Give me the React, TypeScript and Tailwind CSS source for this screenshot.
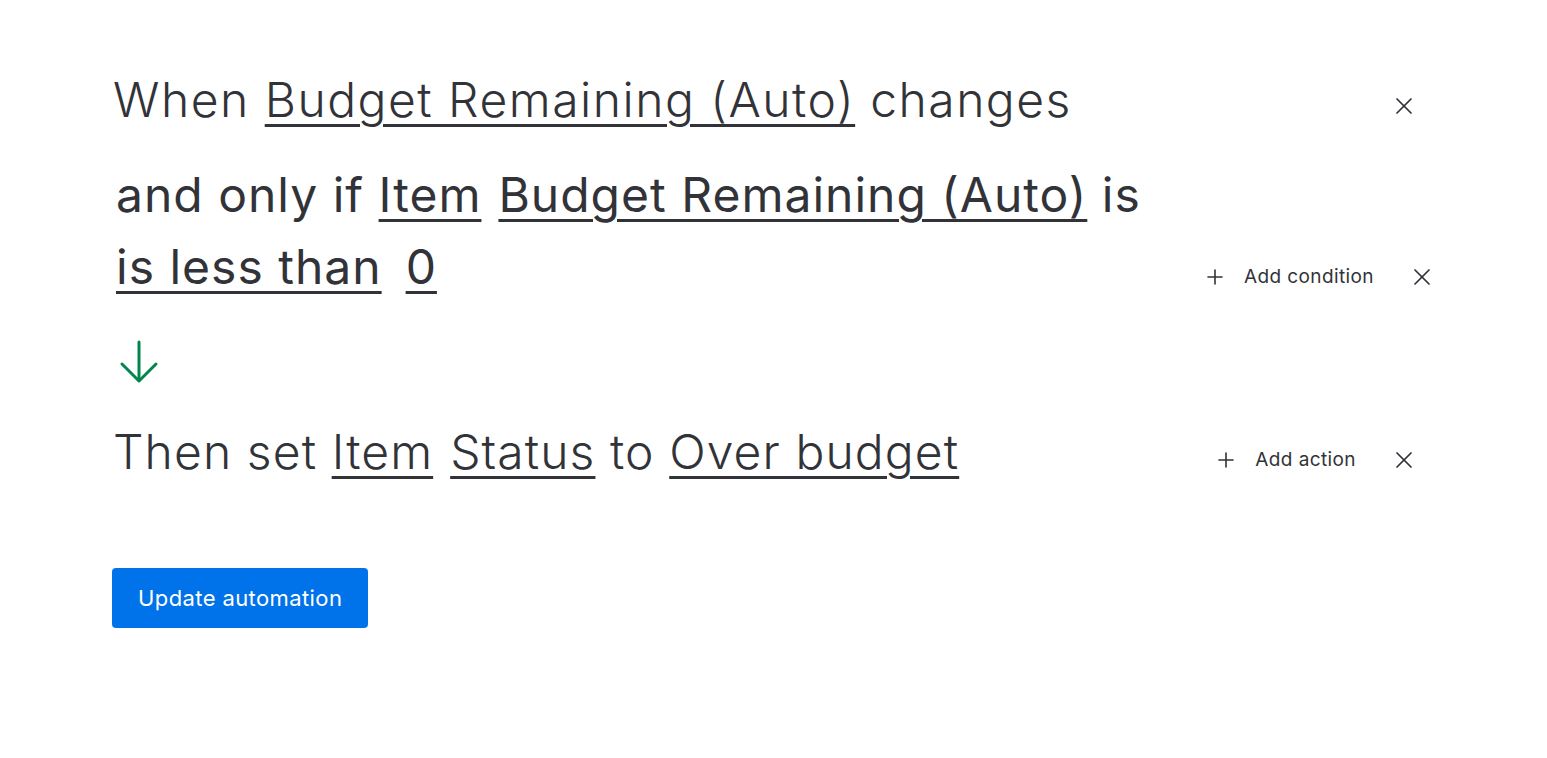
import { Plus, X } from "lucide-react";

const main = "font-['Inter','Noto_Sans',sans-serif] text-[48px] text-[#323338]";
const link = "underline decoration-[3px] underline-offset-[7px] decoration-[#323338] cursor-pointer";

function Pick({ children }: { children: React.ReactNode }) {
  return <span className={link}>{children}</span>;
}

function SideAction({ label, extra }: { label?: string; extra?: string }) {
  return (
    <div className={`flex items-center text-[#323338] font-['Inter',sans-serif] text-[19px] tracking-[0.4px] ${extra || ""}`}>
      {label && (
        <button className="flex items-center gap-[17px] mr-[34px]">
          <Plus className="w-[24px] h-[24px]" strokeWidth={1.6} />
          <span>{label}</span>
        </button>
      )}
      <button>
        <X className="w-[28px] h-[28px]" strokeWidth={1.5} />
      </button>
    </div>
  );
}

export default function App() {
  return (
    <div className="min-h-screen bg-white pl-[113px] pt-[70px]">
      <div className="w-[1305px]">
        {/* Trigger */}
        <div className="flex items-center justify-between">
          <div className={`${main} font-light leading-[60px] tracking-[1.5px]`}>
            When <Pick>Budget Remaining (Auto)</Pick> changes
          </div>
          <SideAction extra="mt-[12px]" />
        </div>

        {/* Condition */}
        <div className="flex items-end justify-between mt-[29px] pl-[3px] w-[1323px]">
          <div className={`${main} font-normal leading-[72px] tracking-[1px] w-[1060px]`}>
            and only if <span className="mr-[17px]"><Pick>Item</Pick></span>
            <Pick>Budget Remaining (Auto)</Pick> is{" "}
            <span className="mr-[24px] whitespace-nowrap"><Pick>is less than</Pick></span>
            <Pick>0</Pick>
          </div>
          <SideAction label="Add condition" extra="mb-[12px]" />
        </div>

        {/* Arrow */}
        <div className="mt-[37px] pl-[6px] text-[#00854d]">
          <svg width="40" height="44" viewBox="0 0 40 44" fill="none" stroke="currentColor" strokeWidth="3" strokeLinecap="round" strokeLinejoin="round">
            <path d="M20 2 V40" />
            <path d="M3 24 L20 41 L37 24" />
          </svg>
        </div>

        {/* Action */}
        <div className="flex items-center justify-between mt-[38px]">
          <div className={`${main} font-light leading-[60px] tracking-[1.1px]`}>
            Then set <span className="mr-[17px]"><Pick>Item</Pick></span>
            <Pick>Status</Pick> to <Pick>Over budget</Pick>
          </div>
          <SideAction label="Add action" extra="mt-[16px]" />
        </div>

        <button className="mt-[86px] -ml-px h-[60px] px-[26px] rounded-[4px] bg-[#0073ea] text-white text-[22px] tracking-[0.4px] font-['Inter',sans-serif]">
          Update automation
        </button>
      </div>
    </div>
  );
}
